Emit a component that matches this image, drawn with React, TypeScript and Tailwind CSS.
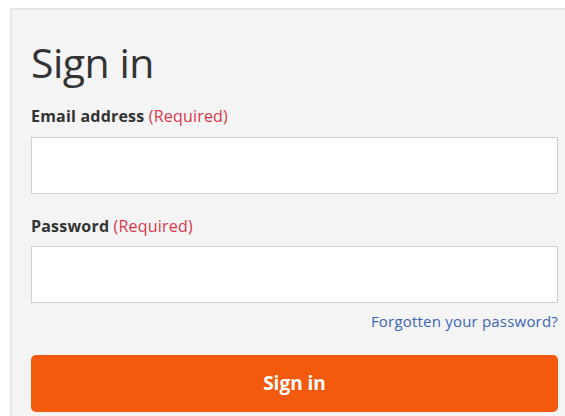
export default function App() {
  return (
    <div
      className="min-h-[416px] bg-white pl-[10px] pt-[8px] overflow-hidden"
      style={{ fontFamily: '"Open Sans", "Noto Sans", sans-serif' }}
    >
      <div className="w-[570px] min-h-[420px] bg-[#f4f4f4] border-l-2 border-t-2 border-[#e6e6e6] pl-[19px] pt-[28px]">
        <form className="w-[527px] flex flex-col" onSubmit={(e) => e.preventDefault()}>
          <h1 className="text-[41px] leading-[48px] text-[#333] tracking-[-0.5px]">Sign in</h1>

          <label className="mt-[19px] text-[16px] leading-[22px] font-bold text-[#333] tracking-[0.2px]">
            Email address <span className="font-normal text-[#d9364a]">(Required)</span>
          </label>
          <input
            type="email"
            className="mt-[10px] h-[57px] bg-white border border-[#cfcfcf] outline-none px-3"
          />

          <label className="mt-[21px] text-[16px] leading-[22px] font-bold text-[#333] tracking-[0.2px]">
            Password <span className="font-normal text-[#d9364a]">(Required)</span>
          </label>
          <input
            type="password"
            className="mt-[9px] h-[57px] bg-white border border-[#cfcfcf] outline-none px-3"
          />

          <a href="#" className="self-end mt-[8px] text-[15px] leading-[20px] text-[#3b66b5] tracking-[0.2px]">
            Forgotten your password?
          </a>

          <button
            type="submit"
            className="mt-[24px] h-[57px] rounded-[5px] bg-[#f45a0e] text-white font-bold text-[19px]"
          >
            Sign in
          </button>
        </form>
      </div>
    </div>
  )
}
